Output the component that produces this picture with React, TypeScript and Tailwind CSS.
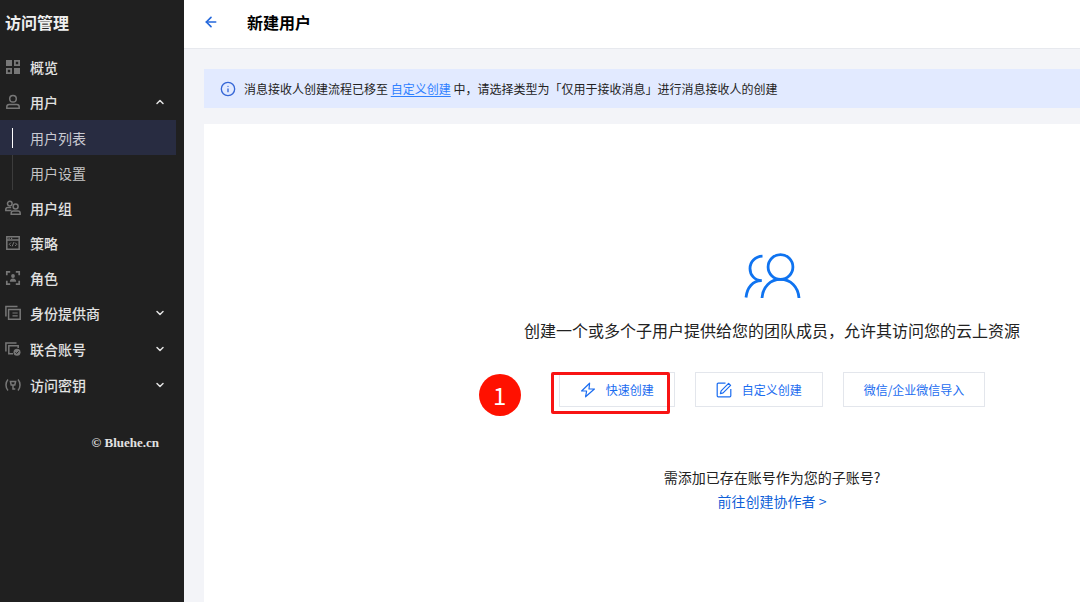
import React, { useState } from 'react';
import { ArrowLeft, ChevronDown, ChevronUp, Info } from 'lucide-react';

interface NavItem {
  label: string;
  icon: React.ReactNode;
  children?: string[];
}

function MenuIcon({ children }: { children: React.ReactNode }) {
  return (
    <svg
      viewBox="0 0 16 16"
      className="w-4 h-4 shrink-0"
      fill="none"
      stroke="currentColor"
      strokeWidth="1.5"
      aria-hidden="true"
    >
      {children}
    </svg>
  );
}

const navItems: NavItem[] = [
  {
    label: '概览',
    icon: (
      <MenuIcon>
        <path d="M1 1h6v6H1zM9 9h6v6H9z" fill="currentColor" stroke="none" />
        <path d="M9.9 1.9h4.2v4.2H9.9zM1.9 9.9h4.2v4.2H1.9z" strokeWidth="1.8" />
      </MenuIcon>
    ),
  },
  {
    label: '用户',
    icon: (
      <MenuIcon>
        <circle cx="8" cy="4.8" r="3.3" />
        <path d="M1.8 14.2v-1.4c0-1.4 1-2.3 2.4-2.3h7.6c1.4 0 2.4.9 2.4 2.3v1.4z" />
      </MenuIcon>
    ),
    children: ['用户列表', '用户设置'],
  },
  {
    label: '用户组',
    icon: (
      <MenuIcon>
        <circle cx="4.8" cy="3.6" r="2.3" />
        <path d="M6.5 10.5H.8V9.4c0-1.2.9-2 2.1-2h3.3" />
        <circle cx="10.6" cy="6.6" r="2.5" />
        <path d="M6.2 14.2v-1c0-1.3.9-2.2 2.2-2.2h4.6c1.3 0 2.2.9 2.2 2.2v1z" />
      </MenuIcon>
    ),
  },
  {
    label: '策略',
    icon: (
      <MenuIcon>
        <path d="M1.8 1.8h12.4v12.4H1.8zM1.8 4.9h12.4" />
        <path d="M3.5 3.3h1.2M6 3.3h1.2" strokeWidth="1.2" />
        <path d="M5.9 7.6 4.2 9.3l1.7 1.7M10.1 7.6l1.7 1.7-1.7 1.7M8.8 7.2l-1.6 4.2" strokeWidth="1" />
      </MenuIcon>
    ),
  },
  {
    label: '角色',
    icon: (
      <MenuIcon>
        <path d="M1.8 5.2V1.8h3.4M10.8 1.8h3.4v3.4M14.2 10.8v3.4h-3.4M5.2 14.2H1.8v-3.4" strokeWidth="1.7" />
        <circle cx="8" cy="6" r="1.9" fill="currentColor" stroke="none" />
        <path d="M4.8 11.8c0-2 1.1-3.3 3.2-3.3s3.2 1.3 3.2 3.3z" fill="currentColor" stroke="none" />
      </MenuIcon>
    ),
  },
  {
    label: '身份提供商',
    icon: (
      <MenuIcon>
        <path d="M.9 11.6V1.6h11.6" />
        <path d="M3.6 4.5h11.6v9.8H3.6z" />
        <path d="M7.5 8h5.2M7.5 10.8h5.2" strokeWidth="1.2" />
      </MenuIcon>
    ),
    children: [],
  },
  {
    label: '联合账号',
    icon: (
      <MenuIcon>
        <path d="M.9 10.6V1.9h10.6" />
        <path d="M8 12.8H3.8V4.7h9.4v2.4" />
        <circle cx="12" cy="11.3" r="3.5" fill="currentColor" stroke="none" />
        <path d="m10.4 11.3 1.2 1.2 2.1-2.2" stroke="#202020" strokeWidth="1" />
      </MenuIcon>
    ),
    children: [],
  },
  {
    label: '访问密钥',
    icon: (
      <MenuIcon>
        <path d="M3 2.6C.3 5.6.3 10.4 3 13.4M13 2.6c2.7 3 2.7 7.8 0 10.8" />
        <path d="M5.4 4.4h5.2L9.8 8H6.2zM8 8v4.8M8 12h2.3" />
      </MenuIcon>
    ),
    children: [],
  },
];

function Sidebar() {
  const [openItem, setOpenItem] = useState('用户');

  return (
    <aside className="w-[184px] shrink-0 bg-[#202020] text-[#e2e2e2]">
      <h2 className="pl-[5px] pt-[10px] text-base leading-6 font-bold text-[#efefef]">访问管理</h2>
      <nav className="mt-[15px] pr-2">
        <ul>
          {navItems.map((item) => {
            const isOpen = openItem === item.label;
            if (!item.children) {
              return (
                <li key={item.label}>
                  <a href="#" className="flex items-center gap-[9px] h-[35px] pl-[5px] text-sm font-medium">
                    <span className="text-[#777777]">{item.icon}</span>
                    {item.label}
                  </a>
                </li>
              );
            }
            return (
              <li key={item.label}>
                <button
                  type="button"
                  aria-expanded={isOpen}
                  onClick={() => setOpenItem(isOpen ? '' : item.label)}
                  className="flex items-center gap-[9px] w-full h-9 pl-[5px] pr-[10px] text-sm font-medium text-left"
                >
                  <span className="text-[#777777]">{item.icon}</span>
                  <span className="grow">{item.label}</span>
                  {isOpen ? (
                    <ChevronUp className="w-3 h-3" strokeWidth={3} />
                  ) : (
                    <ChevronDown className="w-3 h-3" strokeWidth={3} />
                  )}
                </button>
                {isOpen && item.children.length > 0 && (
                  <ul>
                    {item.children.map((child, index) => (
                      <li key={child}>
                        <a
                          href="#"
                          className={`flex items-center h-[35px] pl-3 text-sm ${
                            index === 0 ? 'bg-[#282c41] text-[#c9cad2]' : 'text-[#c4c4c4]'
                          }`}
                        >
                          <span
                            className={`w-px mr-[17px] ${
                              index === 0 ? 'h-5 bg-white' : 'h-full bg-[#3c3c3c]'
                            }`}
                          />
                          {child}
                        </a>
                      </li>
                    ))}
                  </ul>
                )}
              </li>
            );
          })}
        </ul>
      </nav>
      <p className="mt-7 pr-[25px] text-right text-[13px] leading-6 font-bold font-['Liberation_Serif',serif]">
        © Bluehe.cn
      </p>
    </aside>
  );
}

function CreateOptions() {
  const buttonClass =
    'inline-flex items-center gap-[10px] h-[35px] px-5 border border-[#e3e6ec] bg-white text-xs text-[#1a6cf0]';

  return (
    <div className="relative mt-[30px] flex gap-5">
      <button type="button" className={buttonClass}>
        <svg viewBox="0 0 16 16" className="w-4 h-4" fill="none" stroke="currentColor" strokeWidth="1.2" strokeLinejoin="round">
          <path d="M9.6 1.2 1.6 9h5l-1 5.8L14.4 7H9z" />
        </svg>
        快速创建
      </button>
      <button type="button" className={buttonClass}>
        <svg viewBox="0 0 16 16" className="w-4 h-4" fill="none" stroke="currentColor" strokeWidth="1.2" strokeLinejoin="round">
          <path d="M9.5 1.2H2.2a1 1 0 0 0-1 1v11.6a1 1 0 0 0 1 1h11.6a1 1 0 0 0 1-1V7" />
          <path d="m12.6 1.4 2 2-7.5 7.5-2.7.7.7-2.7z" />
        </svg>
        自定义创建
      </button>
      <button type="button" className={buttonClass}>
        微信/企业微信导入
      </button>

      <div className="absolute -left-2 top-0 w-[119px] h-[42px] border-3 border-[#f81414] rounded-xs pointer-events-none" />
      <div className="absolute -left-20 top-0.5 flex items-center justify-center w-[42px] h-[42px] rounded-full bg-[#ff1100] text-white text-2xl">
        1
      </div>
    </div>
  );
}

export default function App() {
  return (
    <div className="flex min-h-screen overflow-hidden bg-[#f3f4f8] font-['Noto_Sans_CJK_SC',sans-serif] text-[#222222]">
      <Sidebar />

      <div className="flex flex-col grow min-w-0">
        <header className="flex items-center gap-7 h-[49px] pl-[19px] pb-1 bg-white border-b border-[#e7e9ee]">
          <a href="#" aria-label="返回" className="text-[#2468dc]">
            <ArrowLeft className="w-4 h-4" strokeWidth={2.5} />
          </a>
          <h1 className="text-base leading-6 font-bold text-black">新建用户</h1>
        </header>

        <main className="flex flex-col grow gap-4 pl-5 pt-5">
          <div className="flex items-center gap-2 h-[39px] pl-4 bg-[#e2eaff] text-xs whitespace-nowrap">
            <Info className="w-4 h-4 shrink-0 text-[#3566d6]" />
            <p>
              消息接收人创建流程已移至{' '}
              <a href="#" className="text-[#2f80ff] underline underline-offset-2">
                自定义创建
              </a>{' '}
              中，请选择类型为「仅用于接收消息」进行消息接收人的创建
            </p>
          </div>

          <section className="flex flex-col items-center grow pl-[260px] pt-[129px] bg-white whitespace-nowrap">
            <svg viewBox="0 0 58 46" className="w-[58px] h-[46px]" fill="none" stroke="#0f73f0" strokeWidth="2.8">
              <circle cx="37.5" cy="14" r="12.4" />
              <path d="M19 45c.8-11.5 8.5-18.6 18.500-18.600S55.200 33.500 56 45" />
              <path d="M19.500 3.200C12 3.500 7 8.800 7 15.500c0 6.500 4.500 11.800 11.800 12.200C10 27.500 4 34.500 3 44.500" />
            </svg>
            <p className="mt-[19px] text-base leading-6">
              创建一个或多个子用户提供给您的团队成员，允许其访问您的云上资源
            </p>
            <CreateOptions />
            <p className="mt-[58px] text-sm leading-6">需添加已存在账号作为您的子账号?</p>
            <a href="#" className="text-sm leading-6 text-[#0f5fd8]">
              前往创建协作者 &gt;
            </a>
          </section>
        </main>
      </div>
    </div>
  );
}
